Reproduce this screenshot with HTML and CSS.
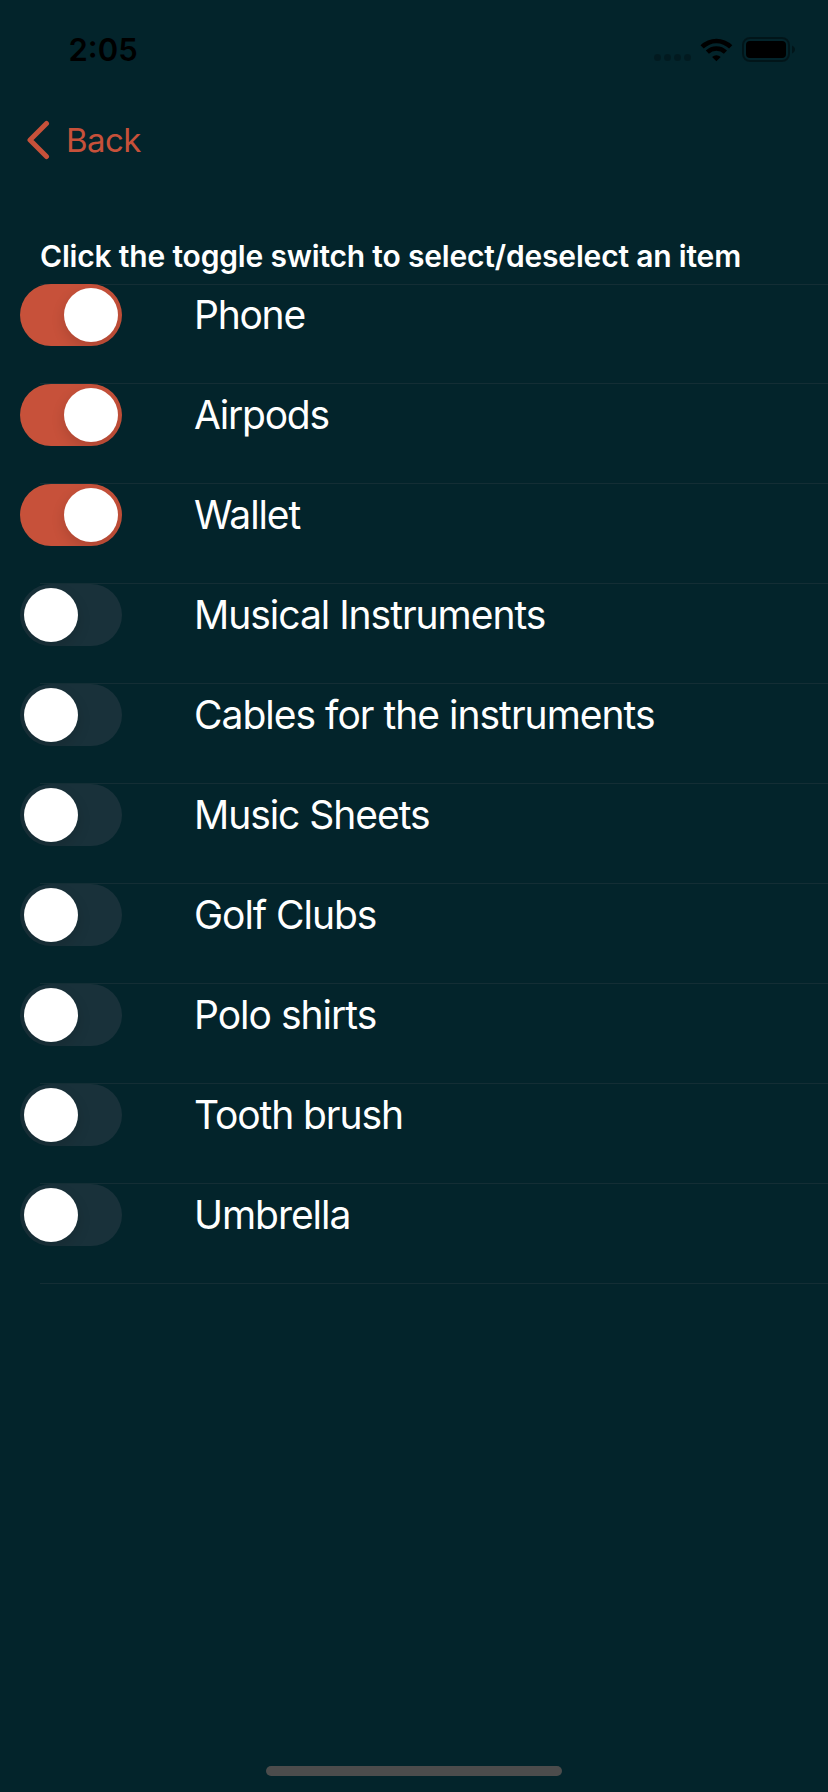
FILE: index.html
```
<!DOCTYPE html>
<html lang="en">
<head>
<meta charset="utf-8">
<title>Packing list</title>
<link rel="stylesheet" href="styles.css">
</head>
<body>
<div class="screen">
  <header class="status">
    <span class="time">2:05</span>
    <svg class="indicators" width="144" height="28" viewBox="0 0 144 28">
      <g opacity=".25"><circle cx="3.5" cy="21.5" r="3.5"/><circle cx="13.5" cy="21.5" r="3.5"/><circle cx="23.5" cy="21.5" r="3.5"/><circle cx="33.5" cy="21.5" r="3.5"/></g>
      <path d="M62.4 25.2l-4.3-4.3a6.4 6.4 0 0 1 8.6 0z"/>
      <path d="M51.8 14.6a15.2 15.2 0 0 1 21.2 0l-3.1 3.1a10.8 10.8 0 0 0-15 0z"/>
      <path d="M46.5 9.3a22.8 22.8 0 0 1 31.8 0l-3.2 3.2a18.2 18.2 0 0 0-25.4 0z"/>
      <rect x="89" y="2" width="46" height="23" rx="7" fill="none" stroke="#000" stroke-width="2" opacity=".4"/>
      <rect x="92" y="5" width="40" height="17" rx="4"/>
      <path d="M138 9.5c4 1.4 4 6.6 0 8z" opacity=".4"/>
    </svg>
  </header>
  <nav class="nav">
    <svg class="chevron" width="24" height="40" viewBox="0 0 24 40"><path d="M20.5 3.5L4 20l16.5 16.5" fill="none" stroke="#c7513a" stroke-width="5" stroke-linecap="round" stroke-linejoin="round"/></svg>
    <span class="back">Back</span>
  </nav>
  <h1 class="hint"><span>Click the toggle switch to select/deselect an item</span></h1>
  <ul class="list">
    <li class="row"><span class="switch on"><i class="knob"></i></span><span class="label phone">Phone</span></li>
    <li class="row"><span class="switch on"><i class="knob"></i></span><span class="label airpods">Airpods</span></li>
    <li class="row"><span class="switch on"><i class="knob"></i></span><span class="label wallet">Wallet</span></li>
    <li class="row"><span class="switch"><i class="knob"></i></span><span class="label instruments">Musical Instruments</span></li>
    <li class="row"><span class="switch"><i class="knob"></i></span><span class="label cables">Cables for the instruments</span></li>
    <li class="row"><span class="switch"><i class="knob"></i></span><span class="label sheets">Music Sheets</span></li>
    <li class="row"><span class="switch"><i class="knob"></i></span><span class="label golf">Golf Clubs</span></li>
    <li class="row"><span class="switch"><i class="knob"></i></span><span class="label polo">Polo shirts</span></li>
    <li class="row"><span class="switch"><i class="knob"></i></span><span class="label brush">Tooth brush</span></li>
    <li class="row"><span class="switch"><i class="knob"></i></span><span class="label umbrella">Umbrella</span></li>
  </ul>
  <div class="home"></div>
</div>
</body>
</html>
```
FILE: styles.css
```
* { box-sizing: border-box; margin: 0; padding: 0; }
body { background: #03242b; font-family: Inter, "Liberation Sans", sans-serif; }
.screen { width: 828px; height: 1792px; display: flex; flex-direction: column; overflow: hidden; background: #03242b; }
.status { height: 88px; padding: 34px 34px 0 68.5px; display: flex; justify-content: space-between; color: #000; }
.time { font-size: 31px; font-weight: 600; line-height: 32px; }
.indicators { margin-right: -4px; margin-top: 2px; }
.nav { height: 144px; padding: 32px 0 0 25.5px; display: flex; gap: 16.5px; color: #c7513a; }
.chevron { flex: none; }
.back { font-size: 33px; line-height: 40px; letter-spacing: -0.6px; }
.hint { height: 52px; padding-left: 40px; font-size: 30px; font-weight: 600; line-height: 49px; color: #fff; letter-spacing: -0.18px; white-space: nowrap; }
.list { list-style: none; background: linear-gradient(#142e35, #142e35) 40px 0 / 100% 1px no-repeat; }
.row { height: 100px; padding-left: 20px; display: flex; gap: 72px; background: linear-gradient(#142e35, #142e35) 40px 99px / 100% 1px no-repeat; }
.switch { width: 102px; height: 62px; border-radius: 31px; padding: 4px; background: #19313a; display: flex; flex: none; overflow: hidden; }
.switch.on { background: #c7513a; justify-content: flex-end; }
.knob { width: 54px; height: 54px; border-radius: 50%; background: #fff; box-shadow: 0 5px 14px rgba(0, 0, 0, .14); }
.label { font-size: 39px; line-height: 62px; color: #fff; white-space: nowrap; }
.phone { letter-spacing: -1.25px; }
.airpods { letter-spacing: -1.25px; }
.wallet { letter-spacing: -1.1px; }
.instruments { letter-spacing: -1.02px; }
.cables { letter-spacing: -0.99px; }
.sheets { letter-spacing: -1.05px; }
.golf { letter-spacing: -1.05px; }
.polo { letter-spacing: -1px; }
.brush { letter-spacing: -1.1px; }
.umbrella { letter-spacing: -1.05px; }
.home { width: 296px; height: 10px; border-radius: 5px; background: #4c4c4c; margin: auto auto 16px 266px; }
```
